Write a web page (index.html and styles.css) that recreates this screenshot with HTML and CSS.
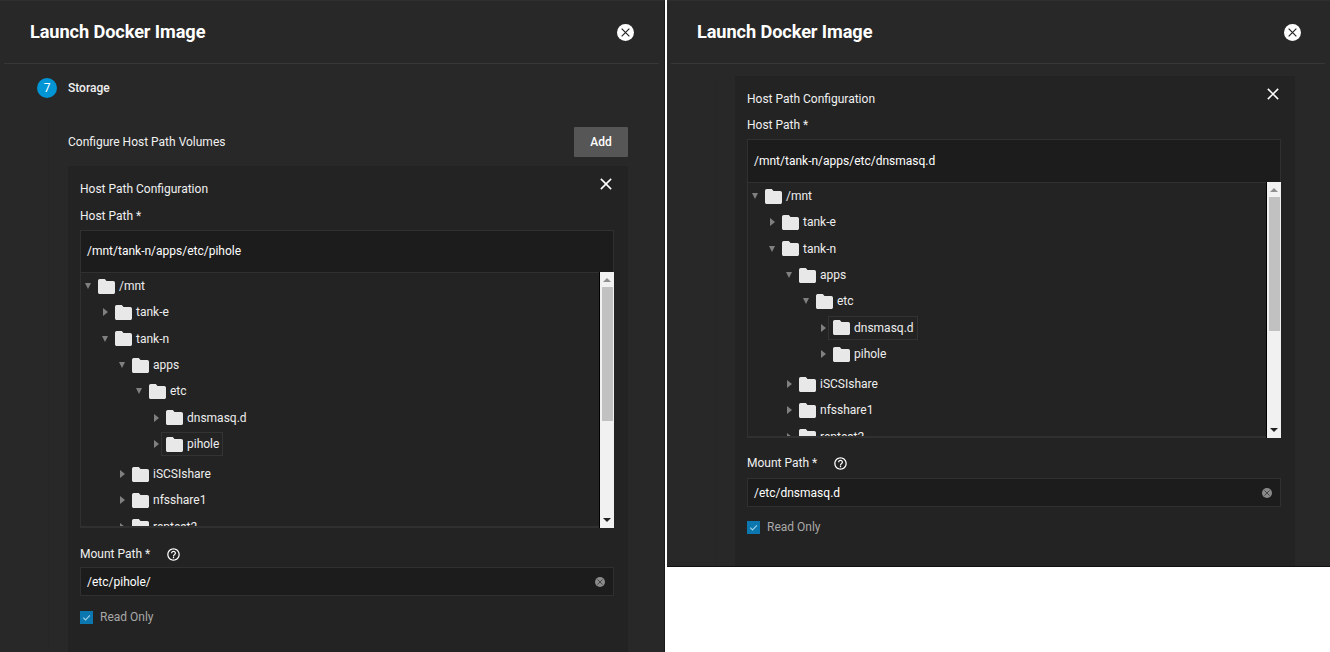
FILE: index.html
```html
<!DOCTYPE html>
<html lang="en">
<head>
    <meta charset="UTF-8">
    <meta name="viewport" content="width=device-width, initial-scale=1.0">
    <title>Launch Docker Image</title>
    <link rel="stylesheet" href="styles.css">
</head>
<body>
    <svg class="icon-defs">
        <symbol id="folder" viewBox="2 4 20 16" preserveAspectRatio="none"><path d="M10 4H4c-1.1 0-2 .9-2 2v12c0 1.1.9 2 2 2h16c1.1 0 2-.9 2-2V8c0-1.1-.9-2-2-2h-8l-2-2z"/></symbol>
        <symbol id="help" viewBox="0 0 24 24"><path d="M11 18h2v-2h-2v2zm1-16C6.48 2 2 6.48 2 12s4.48 10 10 10 10-4.48 10-10S17.52 2 12 2zm0 18c-4.41 0-8-3.59-8-8s3.59-8 8-8 8 3.59 8 8-3.59 8-8 8zm0-14c-2.21 0-4 1.79-4 4h2c0-1.1.9-2 2-2s2 .9 2 2c0 2-3 1.75-3 5h2c0-2.25 3-2.5 3-5 0-2.21-1.79-4-4-4z"/></symbol>
        <symbol id="cross" viewBox="0 0 14 14"><path d="M1 1l12 12M13 1L1 13" fill="none" stroke="currentColor" stroke-width="1.8"/></symbol>
        <symbol id="tick" viewBox="0 0 14 14"><path d="M3.5 7.2l2.4 2.4 4.8-5" fill="none" stroke="currentColor" stroke-width="1.2"/></symbol>
    </svg>

    <div class="pane">
        <div class="pane-head">
            <h1>Launch Docker Image</h1>
            <span class="close-circle"><svg><use href="#cross"/></svg></span>
        </div>
        <div class="step">
            <span class="step-num">7</span>
            <span class="step-name">Storage</span>
        </div>
        <div class="step-body">
            <div class="list-head">
                <span>Configure Host Path Volumes</span>
                <button class="add-btn">Add</button>
            </div>
            <div class="card">
                <div class="card-title">
                    <span>Host Path Configuration</span>
                    <svg class="card-close"><use href="#cross"/></svg>
                </div>
                <div class="field-label">Host Path *</div>
                <div class="path-input">/mnt/tank-n/apps/etc/pihole</div>
                <div class="tree">
                    <div class="tree-list">
                        <div class="row"><i class="arrow open"></i><span class="node"><svg class="folder"><use href="#folder"/></svg>/mnt</span></div>
                        <div class="row depth-1"><i class="arrow"></i><span class="node"><svg class="folder"><use href="#folder"/></svg>tank-e</span></div>
                        <div class="row depth-1"><i class="arrow open"></i><span class="node"><svg class="folder"><use href="#folder"/></svg>tank-n</span></div>
                        <div class="row depth-2"><i class="arrow open"></i><span class="node"><svg class="folder"><use href="#folder"/></svg>apps</span></div>
                        <div class="row depth-3"><i class="arrow open"></i><span class="node"><svg class="folder"><use href="#folder"/></svg>etc</span></div>
                        <div class="row depth-4"><i class="arrow"></i><span class="node"><svg class="folder"><use href="#folder"/></svg>dnsmasq.d</span></div>
                        <div class="row depth-4 group-end"><i class="arrow"></i><span class="node focused"><svg class="folder"><use href="#folder"/></svg>pihole</span></div>
                        <div class="row depth-2"><i class="arrow"></i><span class="node"><svg class="folder"><use href="#folder"/></svg>iSCSIshare</span></div>
                        <div class="row depth-2"><i class="arrow"></i><span class="node"><svg class="folder"><use href="#folder"/></svg>nfsshare1</span></div>
                        <div class="row depth-2"><i class="arrow"></i><span class="node"><svg class="folder"><use href="#folder"/></svg>reptest2</span></div>
                    </div>
                    <div class="scrollbar">
                        <i class="scroll-up"></i>
                        <div class="scroll-thumb"></div>
                        <i class="scroll-down"></i>
                    </div>
                </div>
                <div class="field-label mount-label">Mount Path * <svg class="help"><use href="#help"/></svg></div>
                <div class="text-input">
                    <span>/etc/pihole/</span>
                    <span class="clear"><svg><use href="#cross"/></svg></span>
                </div>
                <div class="check-row">
                    <span class="checkbox"><svg><use href="#tick"/></svg></span>
                    <span>Read Only</span>
                </div>
            </div>
        </div>
    </div>

    <div class="pane pane-right">
        <div class="pane-head">
            <h1>Launch Docker Image</h1>
            <span class="close-circle"><svg><use href="#cross"/></svg></span>
        </div>
        <div class="step-body">
            <div class="card">
                <div class="card-title">
                    <span>Host Path Configuration</span>
                    <svg class="card-close"><use href="#cross"/></svg>
                </div>
                <div class="field-label">Host Path *</div>
                <div class="path-input">/mnt/tank-n/apps/etc/dnsmasq.d</div>
                <div class="tree">
                    <div class="tree-list">
                        <div class="row"><i class="arrow open"></i><span class="node"><svg class="folder"><use href="#folder"/></svg>/mnt</span></div>
                        <div class="row depth-1"><i class="arrow"></i><span class="node"><svg class="folder"><use href="#folder"/></svg>tank-e</span></div>
                        <div class="row depth-1"><i class="arrow open"></i><span class="node"><svg class="folder"><use href="#folder"/></svg>tank-n</span></div>
                        <div class="row depth-2"><i class="arrow open"></i><span class="node"><svg class="folder"><use href="#folder"/></svg>apps</span></div>
                        <div class="row depth-3"><i class="arrow open"></i><span class="node"><svg class="folder"><use href="#folder"/></svg>etc</span></div>
                        <div class="row depth-4"><i class="arrow"></i><span class="node focused"><svg class="folder"><use href="#folder"/></svg>dnsmasq.d</span></div>
                        <div class="row depth-4 group-end"><i class="arrow"></i><span class="node"><svg class="folder"><use href="#folder"/></svg>pihole</span></div>
                        <div class="row depth-2"><i class="arrow"></i><span class="node"><svg class="folder"><use href="#folder"/></svg>iSCSIshare</span></div>
                        <div class="row depth-2"><i class="arrow"></i><span class="node"><svg class="folder"><use href="#folder"/></svg>nfsshare1</span></div>
                        <div class="row depth-2"><i class="arrow"></i><span class="node"><svg class="folder"><use href="#folder"/></svg>reptest2</span></div>
                    </div>
                    <div class="scrollbar">
                        <i class="scroll-up"></i>
                        <div class="scroll-thumb"></div>
                        <i class="scroll-down"></i>
                    </div>
                </div>
                <div class="field-label mount-label">Mount Path * <svg class="help"><use href="#help"/></svg></div>
                <div class="text-input">
                    <span>/etc/dnsmasq.d</span>
                    <span class="clear"><svg><use href="#cross"/></svg></span>
                </div>
                <div class="check-row">
                    <span class="checkbox"><svg><use href="#tick"/></svg></span>
                    <span>Read Only</span>
                </div>
            </div>
        </div>
    </div>
</body>
</html>
```

FILE: styles.css
```css
html,
body {
    margin: 0px;
    padding: 0px;
    background-color: #ffffff;
    font-family: Roboto, "Liberation Sans", sans-serif;
    font-size: 12px;
    color: #f0f0f0;
}

body {
    display: flex;
    align-items: flex-start;
    gap: 2px;
    width: 1330px;
    height: 652px;
    overflow: hidden;
}

.icon-defs {
    display: none;
}

.pane {
    width: 665px;
    height: 652px;
    flex: none;
    overflow: hidden;
    box-sizing: border-box;
    background-color: #282828;
    border-top: 1px solid #2f2f2f;
    border-right: 1px solid #1a1a1a;
}

.pane-right {
    width: 663px;
    height: 567px;
    border-right: 0;
    border-bottom: 1px solid #111111;
}

.pane-head {
    height: 62px;
    margin: 0 5px 0 4px;
    padding: 0 25px 0 26px;
    display: flex;
    align-items: center;
    justify-content: space-between;
    border-bottom: 1px solid #373737;
}

.pane-right .pane-head {
    padding-right: 24px;
}

.pane-head h1 {
    margin: 0 0 2px;
    font-size: 18.2px;
    font-weight: 700;
    letter-spacing: -0.1px;
    color: #ffffff;
}

.close-circle {
    width: 17px;
    height: 17px;
    border-radius: 50%;
    background-color: #ffffff;
    color: #222222;
    display: flex;
    align-items: center;
    justify-content: center;
}

.close-circle svg {
    width: 9px;
    height: 9px;
}

.step {
    display: flex;
    align-items: center;
    gap: 11px;
    height: 20px;
    margin: 14px 0 0 37px;
}

.step-num {
    width: 20px;
    height: 20px;
    border-radius: 50%;
    background-color: #0095d5;
    color: #ffffff;
    font-size: 12px;
    line-height: 20px;
    text-align: center;
}

.step-name {
    font-weight: 500;
}

.step-body {
    margin: 0 36px 0 48px;
    padding-left: 19px;
    border-left: 1px solid #262626;
}

.pane-right .step-body {
    margin-right: 35px;
}

.list-head {
    height: 30px;
    margin-top: 19px;
    padding-top: 10px;
    display: flex;
    align-items: center;
    justify-content: space-between;
}

.add-btn {
    width: 54px;
    height: 30px;
    padding: 0;
    border: 0;
    border-radius: 1px;
    background-color: #565656;
    color: #ffffff;
    font-family: inherit;
    font-size: 12px;
    font-weight: 500;
}

.card {
    margin-top: 9px;
    min-height: 640px;
    padding: 8px 14px 0 12px;
    background-color: #232323;
}

.pane-right .card {
    margin-top: 12px;
}

.card-title {
    display: flex;
    justify-content: space-between;
    height: 30px;
    line-height: 16px;
    padding-top: 7px;
    box-sizing: border-box;
}

.card-close {
    width: 12px;
    height: 12px;
    margin: -3px 2px 0 0;
    color: #ffffff;
}

.field-label {
    height: 16px;
    line-height: 16px;
    margin: 4px 0 6px;
}

.pane-right .field-label {
    margin: 3px 0 6px;
}

.path-input {
    height: 42px;
    box-sizing: border-box;
    padding-left: 6px;
    line-height: 40px;
    background-color: #1c1c1c;
    border: 1px solid #303030;
    border-bottom: 0;
    color: #ffffff;
}

.pane-right .path-input {
    height: 43px;
    line-height: 42px;
}

.tree {
    height: 256px;
    box-sizing: border-box;
    display: flex;
    border: 1px solid #303030;
    border-right: 0;
    border-bottom: 2px solid #303030;
}

.tree-list {
    flex: 1;
    overflow: hidden;
}

.row {
    height: 26.33px;
    display: flex;
    align-items: center;
}

.depth-1 {
    padding-left: 17px;
}

.depth-2 {
    padding-left: 34px;
}

.depth-3 {
    padding-left: 51px;
}

.depth-4 {
    padding-left: 68px;
}

.group-end {
    margin-bottom: 3.7px;
}

.arrow {
    width: 14px;
    height: 8px;
    margin-right: 3px;
    position: relative;
    flex: none;
}

.arrow::before {
    content: "";
    position: absolute;
    left: 5px;
    top: 0;
    border-style: solid;
    border-width: 4px 0 4px 5px;
    border-color: transparent transparent transparent #808080;
}

.arrow.open::before {
    left: 4px;
    top: 1px;
    border-width: 6px 3.5px 0 3.5px;
    border-color: #808080 transparent transparent transparent;
}

.node {
    display: flex;
    align-items: center;
    height: 24px;
    box-sizing: border-box;
    margin-left: -5px;
    padding: 0 3px 0 4px;
    border: 1px solid transparent;
    color: #eeeeee;
}

.node.focused {
    border-color: #333333;
}

.folder {
    width: 17px;
    height: 15px;
    margin-right: 4px;
    fill: #e8e8e8;
    flex: none;
}

.scrollbar {
    width: 15px;
    flex: none;
    margin: -1px 0 -2px;
    padding: 0 2px;
    box-sizing: border-box;
    background-color: #f1f1f1;
    border-left: 1px solid #000000;
    display: flex;
    flex-direction: column;
    align-items: center;
}

.scroll-up,
.scroll-down {
    width: 0;
    height: 0;
    border-style: solid;
    border-color: transparent;
}

.scroll-up {
    margin-top: 6px;
    border-width: 0 4px 4px 4px;
    border-bottom-color: #8f8f8f;
}

.scroll-thumb {
    width: 11px;
    height: 134px;
    margin-top: 5px;
    background-color: #c1c1c1;
}

.scroll-down {
    margin-top: auto;
    margin-bottom: 6px;
    border-width: 4px 4px 0 4px;
    border-top-color: #222222;
}

.mount-label {
    margin-top: 18px;
    margin-bottom: 5px;
    display: flex;
    align-items: center;
}

.help {
    width: 15px;
    height: 15px;
    margin: 0 0 0 16px;
    fill: #ffffff;
}

.pane-right .mount-label {
    margin-top: 17px;
    margin-bottom: 7px;
}

.text-input {
    height: 29px;
    box-sizing: border-box;
    padding: 0 8px 0 6px;
    display: flex;
    align-items: center;
    justify-content: space-between;
    background-color: #1c1c1c;
    border: 1px solid #303030;
    color: #ffffff;
}

.clear {
    width: 10px;
    height: 10px;
    border-radius: 50%;
    background-color: #8a8a8a;
    color: #333333;
    display: flex;
    align-items: center;
    justify-content: center;
}

.clear svg {
    width: 6px;
    height: 6px;
}

.check-row {
    margin-top: 14px;
    display: flex;
    align-items: center;
    gap: 7px;
    color: #a8a8a8;
}

.pane-right .check-row {
    margin-top: 13px;
}

.checkbox {
    width: 13px;
    height: 13px;
    background-color: #0b77ae;
    color: #9fd0e8;
}

.checkbox svg {
    width: 13px;
    height: 13px;
    display: block;
}
```
